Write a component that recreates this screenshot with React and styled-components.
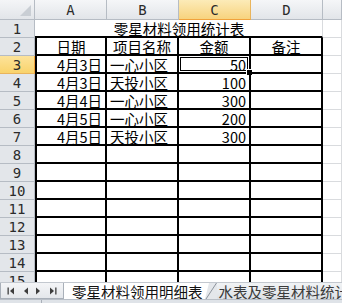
import styled, { createGlobalStyle, css } from 'styled-components'

const cjk = `"Noto Sans CJK SC", "DejaVu Sans", sans-serif`
const mono = `"DejaVu Sans Mono", "Liberation Mono", monospace`

const headerLine = '#b6bcc4'
const gridLine = '#d9dbde'
const ink = '#000'

const GlobalStyle = createGlobalStyle`
  html, body {
    margin: 0;
    padding: 0;
    background: #fff;
    overflow: hidden;
  }
`

const Window = styled.div`
  width: 342px;
  height: 303px;
  display: flex;
  flex-direction: column;
  overflow: hidden;
  background: #fff;
`

const Sheet = styled.div`
  height: 282px;
  flex: none;
  overflow: hidden;
  display: grid;
  grid-template-columns: 35px 72px 72px 72px 72px 1fr;
  grid-template-rows: 20px repeat(15, 18px);
`

const Corner = styled.div`
  box-sizing: border-box;
  background: linear-gradient(#f4f5f7, #e2e5e9);
  border-right: 1px solid ${headerLine};
  border-bottom: 1px solid ${headerLine};
  position: relative;
  &::after {
    content: '';
    position: absolute;
    right: 3px;
    bottom: 3px;
    width: 0;
    height: 0;
    border-left: 11px solid transparent;
    border-bottom: 11px solid #c9ced4;
  }
`

const ColHead = styled.div`
  box-sizing: border-box;
  display: flex;
  align-items: center;
  justify-content: center;
  font: 14px ${mono};
  color: #2b2b2b;
  background: linear-gradient(#f5f6f8, #e2e5e9);
  border-right: 1px solid ${headerLine};
  border-bottom: 1px solid ${headerLine};
  ${({ $active }) =>
    $active &&
    css`
      background: linear-gradient(#fcebb8, #f7d37e);
      border-bottom-color: #f0a23c;
      border-right-color: #e9b45c;
    `}
`

const RowHead = styled.div`
  box-sizing: border-box;
  display: flex;
  align-items: center;
  justify-content: center;
  font: 14px/18px ${mono};
  color: #2b2b2b;
  background: #e3e6ea;
  border-right: 1px solid ${headerLine};
  border-bottom: 1px solid ${headerLine};
  ${({ $active }) =>
    $active &&
    css`
      background: linear-gradient(#fde39a, #f9d36c);
      border-right-color: #f0a23c;
      border-bottom-color: #e9b45c;
    `}
`

const Cell = styled.div`
  box-sizing: border-box;
  position: relative;
  font: 14.5px/17px ${cjk};
  color: #000;
  white-space: nowrap;
  padding: 0 3px;
  text-align: ${({ $align }) => $align || 'left'};
  border-right: 1px solid ${gridLine};
  border-bottom: 1px solid ${gridLine};
  ${({ $table }) =>
    $table &&
    css`
      border-right: 2px solid ${ink};
      border-bottom: 2px solid ${ink};
    `}
  ${({ $first }) =>
    $first &&
    css`
      border-left: 2px solid ${ink};
    `}
`

const TitleCell = styled(Cell)`
  grid-column: span 4;
  text-align: center;
  border-right: 1px solid ${gridLine};
  border-bottom: 2px solid ${ink};
  padding-left: 4px;
`

const Selection = styled.div`
  position: absolute;
  top: -2px;
  left: -2px;
  right: -2px;
  bottom: -2px;
  border: 2px solid ${ink};
  pointer-events: none;
  &::before {
    content: '';
    position: absolute;
    inset: 1px;
    border: 1px solid ${ink};
  }
  &::after {
    content: '';
    position: absolute;
    right: -4px;
    bottom: -4px;
    width: 5px;
    height: 5px;
    background: ${ink};
    border: 1px solid #fff;
  }
`

const TabBar = styled.div`
  height: 16px;
  flex: none;
  display: flex;
  align-items: stretch;
  overflow: hidden;
  background: #e7eaee;
  border-top: 1px solid #c3c8cf;
  font: 14.5px/15px ${cjk};
  white-space: nowrap;
`

const NavBox = styled.div`
  width: 64px;
  flex: none;
  box-sizing: border-box;
  display: flex;
  align-items: center;
  justify-content: space-around;
  padding: 0 3px;
  background: linear-gradient(#f4f5f7, #e4e7eb);
  border: 1px solid #a9b0b9;
  border-top: none;
`

const ActiveTab = styled.div`
  flex: none;
  display: flex;
  align-items: center;
  padding: 0 2px 0 8px;
  background: #fff;
  color: #111;
`

const Slant = styled.svg`
  width: 12px;
  height: 16px;
  flex: none;
  display: block;
`

const Tab = styled.div`
  flex: none;
  display: flex;
  align-items: center;
  padding-left: 2px;
  background: linear-gradient(#f1f3f5, #dde1e6);
  color: #3a3a3a;
`

const StatusStrip = styled.div`
  flex: 1;
  display: grid;
  grid-template-columns: 42px 1fr;
  background: #dfe3e8;
  border-top: 1px solid #b9bfc7;
`

const StripPart = styled.div`
  border-right: 1px solid #a9b0b9;
`

const NavIcon = ({ dir, bar }) => (
  <svg width="8" height="8" viewBox="0 0 8 8">
    {dir === 'left' ? (
      <>
        {bar && <rect x="0.5" y="0.5" width="1.3" height="7" fill="#3d3d3d" />}
        <polygon points="7,0.5 7,7.5 3,4" fill="#3d3d3d" />
      </>
    ) : (
      <>
        <polygon points="1,0.5 1,7.5 5,4" fill="#3d3d3d" />
        {bar && <rect x="6.2" y="0.5" width="1.3" height="7" fill="#3d3d3d" />}
      </>
    )}
  </svg>
)

const columns = ['A', 'B', 'C', 'D']

const data = [
  ['4月3日', '一心小区', '50'],
  ['4月3日', '天投小区', '100'],
  ['4月4日', '一心小区', '300'],
  ['4月5日', '一心小区', '200'],
  ['4月5日', '天投小区', '300'],
]

const headings = ['日期', '项目名称', '金额', '备注']

export default function App() {
  const rows = []
  for (let r = 3; r <= 15; r++) {
    const row = data[r - 3] || []
    rows.push(
      <RowHead key={`h${r}`} $active={r === 3}>
        {r}
      </RowHead>,
      <Cell key={`a${r}`} $table $first $align="right">
        {row[0]}
      </Cell>,
      <Cell key={`b${r}`} $table>
        {row[1]}
      </Cell>,
      <Cell key={`c${r}`} $table $align="right">
        {row[2]}
        {r === 3 && <Selection />}
      </Cell>,
      <Cell key={`d${r}`} $table />,
      <Cell key={`e${r}`} />
    )
  }

  return (
    <Window>
      <GlobalStyle />
      <Sheet>
        <Corner />
        {columns.map((c) => (
          <ColHead key={c} $active={c === 'C'}>
            {c}
          </ColHead>
        ))}
        <ColHead />

        <RowHead>1</RowHead>
        <TitleCell>零星材料领用统计表</TitleCell>
        <Cell />

        <RowHead>2</RowHead>
        {headings.map((h, i) => (
          <Cell key={h} $table $first={i === 0} $align="center">
            {h}
          </Cell>
        ))}
        <Cell />

        {rows}
      </Sheet>

      <TabBar>
        <NavBox>
          <NavIcon dir="left" bar />
          <NavIcon dir="left" />
          <NavIcon dir="right" />
          <NavIcon dir="right" bar />
        </NavBox>
        <ActiveTab>零星材料领用明细表</ActiveTab>
        <Slant viewBox="0 0 12 16">
          <polygon points="0,0 12,0 12,16 0,16" fill="#e4e7eb" />
          <polygon points="0,0 4,0 0,16" fill="#fff" />
          <line x1="11.5" y1="0" x2="1" y2="16" stroke="#8d949d" strokeWidth="1" />
        </Slant>
        <Tab>水表及零星材料统计</Tab>
      </TabBar>
      <StatusStrip>
        <StripPart />
        <div />
      </StatusStrip>
    </Window>
  )
}
